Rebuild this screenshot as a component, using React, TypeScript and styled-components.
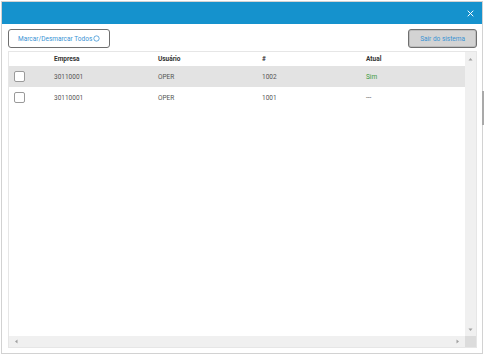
import styled, { createGlobalStyle } from 'styled-components';

const GlobalStyle = createGlobalStyle`
	html, body {
		margin: 0;
		padding: 0;
		background: #ffffff;
		font-family: Roboto, 'Liberation Sans', sans-serif;
	}
`;

const Page = styled.div`
	width: 485px;
	height: 356px;
	padding: 1px 0 0 1px;
	box-sizing: border-box;
`;

const Dialog = styled.div`
	position: relative;
	width: 482px;
	height: 353px;
	box-sizing: border-box;
	border: 1px solid #d2d2d2;
	display: flex;
	flex-direction: column;
	background: #ffffff;

	&::after {
		content: '';
		position: absolute;
		right: -2px;
		top: 89px;
		width: 2px;
		height: 34px;
		background: #a9a9a9;
	}
`;

const Header = styled.div`
	height: 22px;
	background: #1592cd;
	display: flex;
	align-items: center;
	justify-content: flex-end;
	padding-right: 8px;
`;

const CloseIcon = styled.svg`
	width: 7px;
	height: 7px;
`;

const Body = styled.div`
	flex: 1;
	display: flex;
	flex-direction: column;
	padding: 5px 5px 5px 6px;
	gap: 3px;
	min-height: 0;
`;

const Toolbar = styled.div`
	display: flex;
	justify-content: space-between;
	align-items: center;
`;

const Button = styled.button<{ $muted?: boolean }>`
	height: 19px;
	box-sizing: border-box;
	border: 1px solid #6f6f6f;
	border-radius: 3px;
	background: ${(p) => (p.$muted ? '#d3d3d3' : '#ffffff')};
	color: #3a93d4;
	font-family: Roboto, 'Liberation Sans', sans-serif;
	font-size: 6.5px;
	padding: 0 ${(p) => (p.$muted ? '11px' : '9px')};
	display: flex;
	align-items: center;
	gap: 1px;
	cursor: pointer;
	box-shadow: ${(p) => (p.$muted ? 'inset 0 0 0 1px #bcbcbc' : 'none')};
`;

const Ring = styled.svg`
	width: 7px;
	height: 7px;
`;

const TableBox = styled.div`
	flex: 1;
	display: grid;
	grid-template-columns: 1fr 11px;
	grid-template-rows: 1fr 11px;
	border: 1px solid #e6e6e6;
	min-height: 0;
`;

const Grid = styled.div`
	display: flex;
	flex-direction: column;
	overflow: hidden;
`;

const Row = styled.div<{ $head?: boolean; $selected?: boolean }>`
	display: grid;
	grid-template-columns: 40px 104px 104px 104px 1fr;
	align-items: center;
	height: ${(p) => (p.$head ? '14px' : '21px')};
	background: ${(p) => (p.$selected ? '#e3e3e3' : '#ffffff')};
	font-size: 6.5px;
	font-weight: ${(p) => (p.$head ? 700 : 400)};
	color: ${(p) => (p.$head ? '#333333' : '#555555')};
`;

const Cell = styled.div<{ $tone?: 'ok' }>`
	padding-left: 5px;
	line-height: 8px;
	color: ${(p) => (p.$tone === 'ok' ? '#3a9a3a' : 'inherit')};
	white-space: nowrap;
`;

const CheckCell = styled.div`
	display: flex;
	align-items: center;
	padding-left: 5px;
`;

const Check = styled.span`
	width: 11px;
	height: 11px;
	box-sizing: border-box;
	border: 1px solid #9a9a9a;
	border-radius: 2px;
	background: #ffffff;
`;

const VScroll = styled.div`
	background: #f0f0f0;
	display: flex;
	flex-direction: column;
	justify-content: space-between;
	align-items: center;
	padding: 5px 0 4px;
`;

const HScroll = styled.div`
	background: #f0f0f0;
	display: flex;
	justify-content: space-between;
	align-items: center;
	padding: 0 5px;
`;

const Corner = styled.div`
	background: #dcdcdc;
`;

const Arrow = styled.svg`
	width: 5px;
	height: 5px;
`;

const rows = [
	{ empresa: '30110001', usuario: 'OPER', num: '1002', atual: 'Sim', selected: true },
	{ empresa: '30110001', usuario: 'OPER', num: '1001', atual: '---', selected: false },
];

export default function App() {
	return (
		<Page>
			<GlobalStyle />
			<Dialog>
				<Header>
					<CloseIcon viewBox="0 0 10 10">
						<path d="M1 1 L9 9 M9 1 L1 9" stroke="#ffffff" strokeWidth="1.4" />
					</CloseIcon>
				</Header>
				<Body>
					<Toolbar>
						<Button>
							Marcar/Desmarcar Todos
							<Ring viewBox="0 0 10 10">
								<circle cx="5" cy="5" r="3.8" fill="none" stroke="#3a93d4" strokeWidth="1.1" />
							</Ring>
						</Button>
						<Button $muted>Sair do sistema</Button>
					</Toolbar>
					<TableBox>
						<Grid>
							<Row $head>
								<Cell />
								<Cell>Empresa</Cell>
								<Cell>Usuário</Cell>
								<Cell>#</Cell>
								<Cell>Atual</Cell>
							</Row>
							{rows.map((r, i) => (
								<Row key={i} $selected={r.selected}>
									<CheckCell>
										<Check />
									</CheckCell>
									<Cell>{r.empresa}</Cell>
									<Cell>{r.usuario}</Cell>
									<Cell>{r.num}</Cell>
									<Cell $tone={r.atual === 'Sim' ? 'ok' : undefined}>{r.atual}</Cell>
								</Row>
							))}
						</Grid>
						<VScroll>
							<Arrow viewBox="0 0 10 10">
								<path d="M1 7 L5 2 L9 7 Z" fill="#a0a0a0" />
							</Arrow>
							<Arrow viewBox="0 0 10 10">
								<path d="M1 3 L5 8 L9 3 Z" fill="#a0a0a0" />
							</Arrow>
						</VScroll>
						<HScroll>
							<Arrow viewBox="0 0 10 10">
								<path d="M7 1 L2 5 L7 9 Z" fill="#a0a0a0" />
							</Arrow>
							<Arrow viewBox="0 0 10 10">
								<path d="M3 1 L8 5 L3 9 Z" fill="#a0a0a0" />
							</Arrow>
						</HScroll>
						<Corner />
					</TableBox>
				</Body>
			</Dialog>
		</Page>
	);
}
